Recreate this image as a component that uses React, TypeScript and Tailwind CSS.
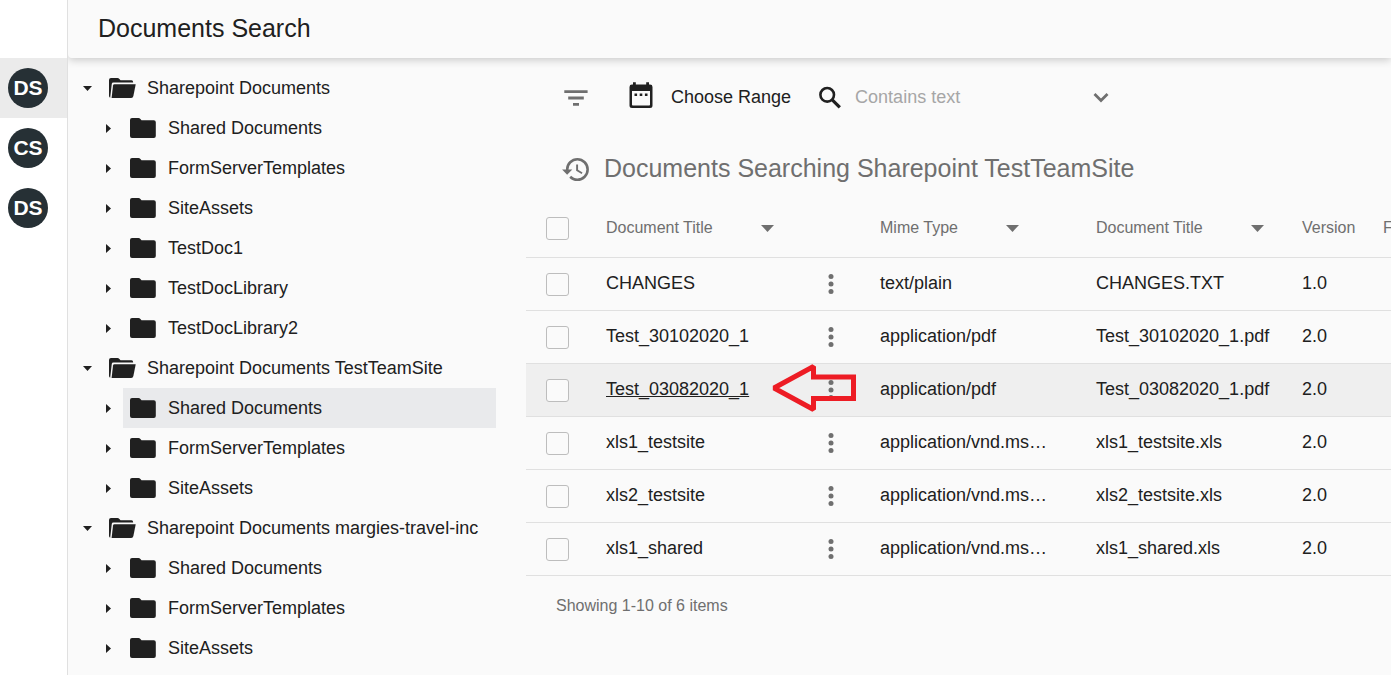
import React from "react";

const groups = [
  {
    name: "Sharepoint Documents",
    selected: -1,
    children: ["Shared Documents", "FormServerTemplates", "SiteAssets", "TestDoc1", "TestDocLibrary", "TestDocLibrary2"],
  },
  {
    name: "Sharepoint Documents TestTeamSite",
    selected: 0,
    children: ["Shared Documents", "FormServerTemplates", "SiteAssets"],
  },
  {
    name: "Sharepoint Documents margies-travel-inc",
    selected: -1,
    children: ["Shared Documents", "FormServerTemplates", "SiteAssets"],
  },
];

const rows = [
  { title: "CHANGES", mime: "text/plain", file: "CHANGES.TXT", version: "1.0" },
  { title: "Test_30102020_1", mime: "application/pdf", file: "Test_30102020_1.pdf", version: "2.0" },
  { title: "Test_03082020_1", mime: "application/pdf", file: "Test_03082020_1.pdf", version: "2.0", active: true },
  { title: "xls1_testsite", mime: "application/vnd.ms…", file: "xls1_testsite.xls", version: "2.0" },
  { title: "xls2_testsite", mime: "application/vnd.ms…", file: "xls2_testsite.xls", version: "2.0" },
  { title: "xls1_shared", mime: "application/vnd.ms…", file: "xls1_shared.xls", version: "2.0" },
];

function Folder() {
  return (
    <svg className="h-5 w-[26px] shrink-0 fill-[#202020]" viewBox="0 0 26 20" aria-hidden="true">
      <path d="M2 0H8.5Q9.6 0 10.4 0.9L11.5 2.3H23.8Q25.8 2.3 25.8 4.3V18Q25.8 20 23.8 20H2Q0 20 0 18V2Q0 0 2 0Z" />
    </svg>
  );
}

function FolderOpen() {
  return (
    <svg className="h-5 w-[27px] shrink-0 fill-[#202020]" viewBox="0 0 27 20" aria-hidden="true">
      <path d="M2 0H8.5Q9.6 0 10.4 0.9L11.5 2.2H22.5Q24.2 2.3 24.2 4.4H4.4Q3 4.4 2.8 5.8L1.2 19.7Q0 19.2 0 17.8V2Q0 0 2 0Z" />
      <path d="M5.4 6.2H26.7L24.4 18Q24 20 22.2 20H2.6L4 7.6Q4.2 6.2 5.4 6.2Z" />
    </svg>
  );
}

function SortArrow() {
  return (
    <svg className="h-[7px] w-[13px] fill-[#6f6f6f]" viewBox="0 0 13 7" aria-hidden="true">
      <path d="M0 0H13L6.5 7Z" />
    </svg>
  );
}

function Checkbox({ label }: { label: string }) {
  return (
    <input
      type="checkbox"
      aria-label={label}
      className="block size-[23px] appearance-none rounded-[3px] border border-[#bdbdbd] bg-[#fafafa]"
    />
  );
}

function Sidebar() {
  return (
    <nav
      aria-label="Workspaces"
      className="relative z-10 flex w-[68px] shrink-0 flex-col border-r border-[#e0e0e0] bg-white pt-[58px]"
    >
      {["DS", "CS", "DS"].map((name, i) => (
        <a key={i} href="#" className={`flex h-[60px] items-center pl-2 ${i === 0 ? "bg-[#ebebeb]" : ""}`}>
          <span className="flex size-10 items-center justify-center rounded-full bg-[#263035] text-[21px] font-bold text-white">
            {name}
          </span>
        </a>
      ))}
    </nav>
  );
}

function Tree() {
  return (
    <ul className="w-[428px] shrink-0 pt-[10px] text-[18px]">
      {groups.map((group) => (
        <li key={group.name}>
          <div className="flex h-10 items-center">
            <button aria-label={`Collapse ${group.name}`} className="flex h-10 w-[41px] items-center pl-[15px]">
              <svg className="h-[5px] w-[9px] fill-[#202020]" viewBox="0 0 9 5" aria-hidden="true">
                <path d="M0 0H9L4.5 5Z" />
              </svg>
            </button>
            <FolderOpen />
            <a href="#" className="ml-[11px] whitespace-nowrap">{group.name}</a>
          </div>
          <ul>
            {group.children.map((child, i) => (
              <li key={child} className="flex h-10 items-center">
                <button aria-label={`Expand ${child}`} className="flex h-10 w-[55px] shrink-0 items-center pl-[38px]">
                  <svg className="h-[9px] w-[5px] fill-[#202020]" viewBox="0 0 5 9" aria-hidden="true">
                    <path d="M0 0V9L5 4.5Z" />
                  </svg>
                </button>
                <a
                  href="#"
                  className={`flex h-10 grow items-center gap-3 pl-[7px] ${i === group.selected ? "bg-[#e9eaec]" : ""}`}
                >
                  <Folder />
                  {child}
                </a>
              </li>
            ))}
          </ul>
        </li>
      ))}
    </ul>
  );
}

function Toolbar() {
  return (
    <div className="flex h-10 items-center text-[18px]">
      <button aria-label="Filter" className="ml-[38px] w-6">
        <svg className="h-[18px] w-6 fill-[#6f6f6f]" viewBox="0 0 24 18" aria-hidden="true">
          <path d="M0.3 2.2H23.6V5H0.3ZM4.2 8.6H19.8V11.4H4.2ZM9 15H15V17.8H9Z" />
        </svg>
      </button>
      <button className="ml-[41px] flex items-center gap-[18px]">
        <svg className="h-[30px] w-6 fill-[#202020]" viewBox="0 0 24 30" aria-hidden="true">
          <path
            fillRule="evenodd"
            d="M4 0.3H6.8V2.6H17.2V0.3H20V2.6H21Q23.5 2.6 23.5 5V23.5Q23.5 26 21 26H3Q0.5 26 0.5 23.5V5Q0.5 2.6 3 2.6H4ZM3 9V22.7Q3 23.5 3.8 23.5H20.2Q21 23.5 21 22.7V9Z"
          />
          <path d="M5.5 11.5H8.1V14.1H5.5ZM10.7 11.5H13.3V14.1H10.7ZM15.9 11.5H18.5V14.1H15.9Z" />
        </svg>
        Choose Range
      </button>
      <label className="ml-7 flex items-center gap-[13px]">
        <svg className="size-[23px] shrink-0" viewBox="0 0 23 23" fill="none" stroke="#202020" aria-hidden="true">
          <circle cx="8.2" cy="8.8" r="6.8" strokeWidth="2.6" />
          <path d="M13 13.6L20.8 21.4" strokeWidth="3.2" />
        </svg>
        <input
          type="text"
          aria-label="Contains text"
          placeholder="Contains text"
          className="w-[238px] bg-transparent outline-none placeholder:text-[#a6a6a6]"
        />
      </label>
      <button aria-label="More search options">
        <svg className="h-3 w-4" viewBox="0 0 16 12" fill="none" stroke="#6f6f6f" strokeWidth="2.8" aria-hidden="true">
          <path d="M1.5 3L8 9.5L14.5 3" />
        </svg>
      </button>
    </div>
  );
}

function Heading() {
  return (
    <div className="mt-8 flex h-10 items-center gap-[15px] pl-9 text-[#6f6f6f]">
      <svg className="h-[23px] w-[27px] fill-current" viewBox="1 3 21 18" aria-hidden="true">
        <path d="M13.5,8H12V13L16.28,15.54L17,14.33L13.5,12.25V8M13,3A9,9 0 0,0 4,12H1L4.96,16.03L9,12H6A7,7 0 0,1 13,5A7,7 0 0,1 20,12A7,7 0 0,1 13,19C11.07,19 9.32,18.21 8.06,16.94L6.64,18.36C8.27,20 10.5,21 13,21A9,9 0 0,0 22,12A9,9 0 0,0 13,3" />
      </svg>
      <h2 className="text-[25px] whitespace-nowrap">Documents Searching Sharepoint TestTeamSite</h2>
    </div>
  );
}

function SortHeader({ name }: { name: string }) {
  return (
    <th className="p-0 text-left font-normal">
      <button className="flex items-center gap-12">
        {name}
        <SortArrow />
      </button>
    </th>
  );
}

function Results() {
  return (
    <table className="mt-[11px] w-full min-w-[867px] table-fixed border-collapse text-[18px]">
      <colgroup>
        <col className="w-20" />
        <col className="w-[216px]" />
        <col className="w-[58px]" />
        <col className="w-[216px]" />
        <col className="w-[206px]" />
        <col className="w-[81px]" />
        <col />
      </colgroup>
      <thead className="text-[16px] text-[#6f6f6f]">
        <tr className="h-[57px] border-b border-[#e0e0e0]">
          <th className="p-0 pl-5">
            <Checkbox label="Select all documents" />
          </th>
          <SortHeader name="Document Title" />
          <td />
          <SortHeader name="Mime Type" />
          <SortHeader name="Document Title" />
          <th className="p-0 text-left font-normal">Version</th>
          <th className="p-0 text-left font-normal">F</th>
        </tr>
      </thead>
      <tbody>
        {rows.map((row) => (
          <tr key={row.title} className={`h-[53px] border-b border-[#e0e0e0] ${row.active ? "bg-[#efefef]" : ""}`}>
            <td className="p-0 pt-[2px] pl-5">
              <Checkbox label={`Select ${row.title}`} />
            </td>
            <td className="p-0">
              <a href="#" className={row.active ? "underline" : ""}>{row.title}</a>
            </td>
            <td className="relative p-0">
              <button aria-label={`Actions for ${row.title}`} className="flex pl-[6px]">
                <svg className="h-5 w-[6px] fill-[#6f6f6f]" viewBox="0 0 6 20" aria-hidden="true">
                  <circle cx="3" cy="2.6" r="2.5" />
                  <circle cx="3" cy="10" r="2.5" />
                  <circle cx="3" cy="17.4" r="2.5" />
                </svg>
              </button>
              {row.active && (
                <svg
                  className="absolute top-0 -left-[51px] h-[49px] w-[86px]"
                  viewBox="0 0 86 49"
                  fill="none"
                  stroke="#ed1c24"
                  strokeWidth="5"
                  strokeMiterlimit="1.5"
                  aria-hidden="true"
                >
                  <path d="M3 24L42.5 2.5V13H82.5V34.5H42.5V45.5Z" />
                </svg>
              )}
            </td>
            <td className="p-0">{row.mime}</td>
            <td className="p-0">{row.file}</td>
            <td className="p-0">{row.version}</td>
            <td />
          </tr>
        ))}
      </tbody>
    </table>
  );
}

export default function App() {
  return (
    <div className="flex min-h-screen overflow-hidden bg-[#fafafa] font-['Liberation_Sans',Arial,sans-serif] text-[#202020]">
      <Sidebar />
      <div className="flex min-w-0 grow flex-col">
        <header className="flex h-[58px] items-center rounded-bl-[4px] pl-[30px] shadow-[0_2px_8px_rgba(0,0,0,0.2)]">
          <h1 className="text-[25px]">Documents Search</h1>
        </header>
        <div className="flex grow">
          <Tree />
          <main className="ml-[30px] min-w-0 grow overflow-hidden pt-[19px]">
            <Toolbar />
            <Heading />
            <Results />
            <p className="mt-[18px] pl-[30px] text-[16px] text-[#6f6f6f]">Showing 1-10 of 6 items</p>
          </main>
        </div>
      </div>
    </div>
  );
}
